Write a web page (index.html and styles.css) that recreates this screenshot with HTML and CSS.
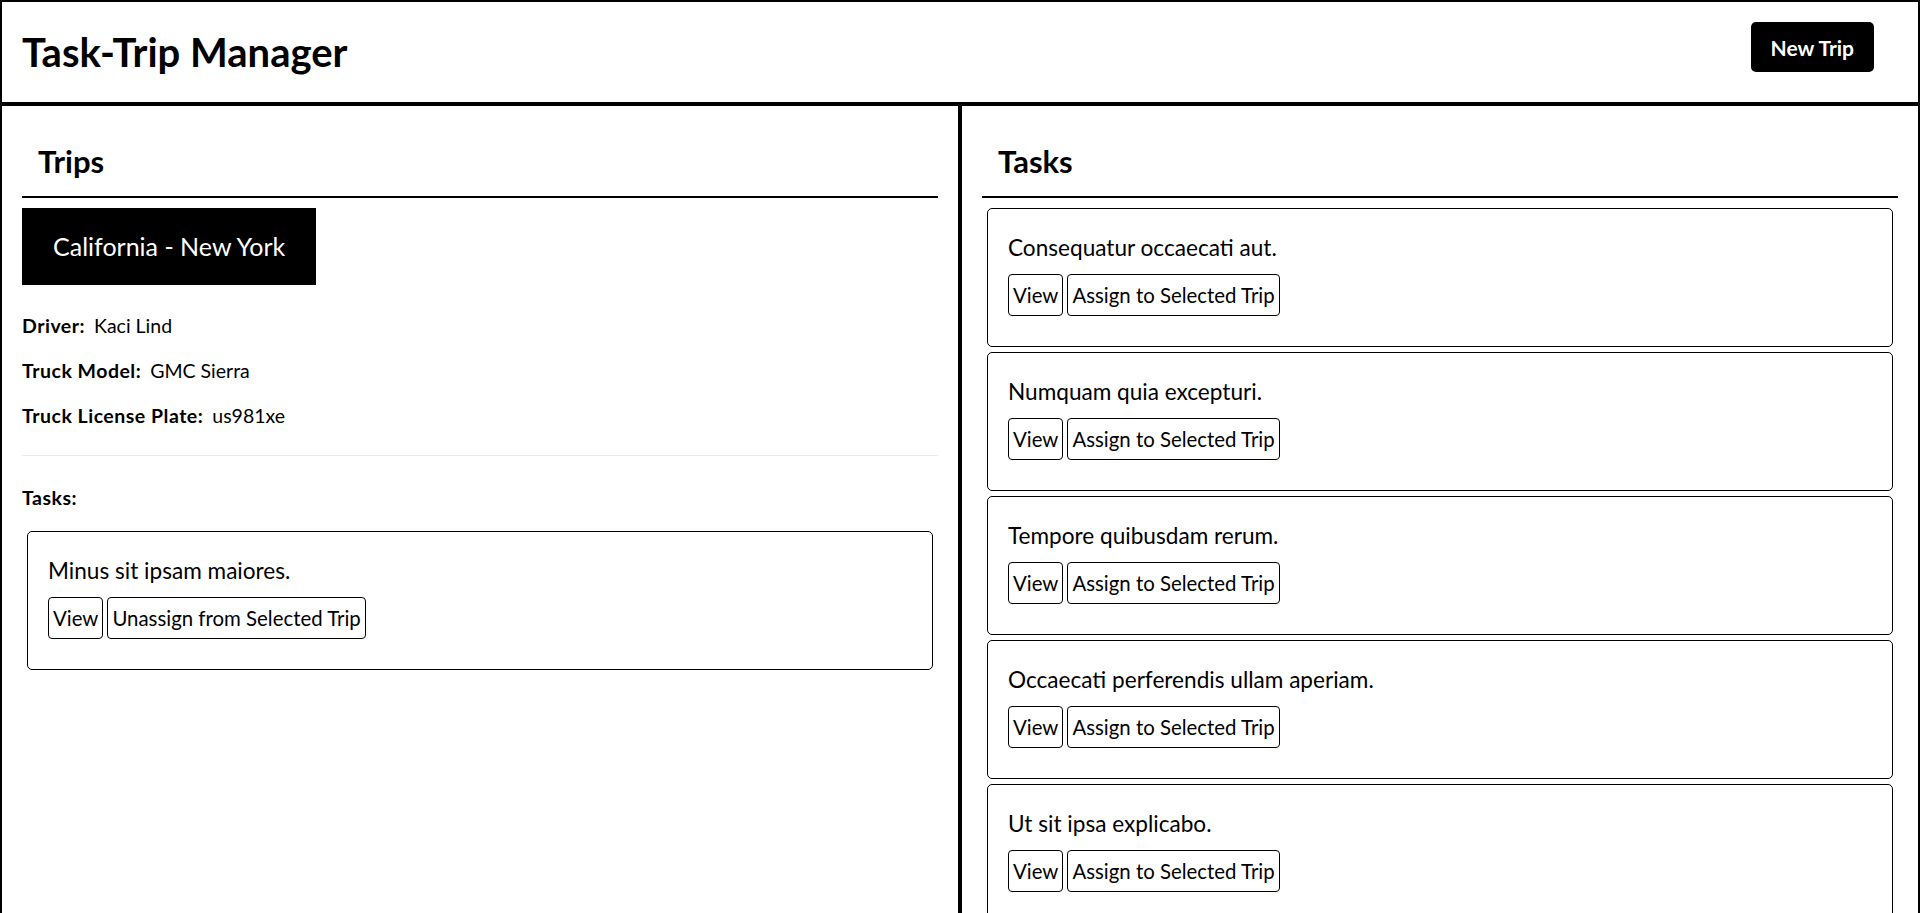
FILE: index.html
```html
<!DOCTYPE html>
<html lang="en">
<head>
<meta charset="utf-8">
<title>Task-Trip Manager</title>
<link rel="stylesheet" href="styles.css">
</head>
<body>
<header class="app-header">
  <h1 class="app-title">Task-Trip Manager</h1>
  <button class="btn-primary">New Trip</button>
</header>
<main class="layout">
  <section class="panel">
    <h2 class="panel-title">Trips</h2>
    <div class="trip-list">
      <button class="trip-item">California - New York</button>
    </div>
    <div class="trip-details">
      <p class="detail"><strong class="label">Driver:</strong> Kaci Lind</p>
      <p class="detail"><strong class="label">Truck Model:</strong> GMC Sierra</p>
      <p class="detail"><strong class="label">Truck License Plate:</strong> us981xe</p>
    </div>
    <hr class="divider">
    <p class="detail tasks-label"><strong class="label">Tasks:</strong></p>
    <div class="task-list trip-tasks">
      <div class="task-card">
        <p class="task-title">Minus sit ipsam maiores.</p>
        <div class="task-actions">
          <button class="btn">View</button>
          <button class="btn">Unassign from Selected Trip</button>
        </div>
      </div>
    </div>
  </section>
  <section class="panel">
    <h2 class="panel-title">Tasks</h2>
    <div class="task-list all-tasks">
      <div class="task-card">
        <p class="task-title">Consequatur occaecati aut.</p>
        <div class="task-actions"><button class="btn">View</button><button class="btn">Assign to Selected Trip</button></div>
      </div>
      <div class="task-card">
        <p class="task-title">Numquam quia excepturi.</p>
        <div class="task-actions"><button class="btn">View</button><button class="btn">Assign to Selected Trip</button></div>
      </div>
      <div class="task-card">
        <p class="task-title">Tempore quibusdam rerum.</p>
        <div class="task-actions"><button class="btn">View</button><button class="btn">Assign to Selected Trip</button></div>
      </div>
      <div class="task-card">
        <p class="task-title">Occaecati perferendis ullam aperiam.</p>
        <div class="task-actions"><button class="btn">View</button><button class="btn">Assign to Selected Trip</button></div>
      </div>
      <div class="task-card">
        <p class="task-title">Ut sit ipsa explicabo.</p>
        <div class="task-actions"><button class="btn">View</button><button class="btn">Assign to Selected Trip</button></div>
      </div>
      <div class="task-card">
        <p class="task-title">Quia voluptatem dolores.</p>
        <div class="task-actions"><button class="btn">View</button><button class="btn">Assign to Selected Trip</button></div>
      </div>
      <div class="task-card">
        <p class="task-title">Eius nihil sint.</p>
        <div class="task-actions"><button class="btn">View</button><button class="btn">Assign to Selected Trip</button></div>
      </div>
    </div>
  </section>
</main>
</body>
</html>
```
FILE: styles.css
```css
* { box-sizing: border-box; }

html, body {
  margin: 0;
  padding: 0;
  background: #fff;
  color: #000;
  font-family: Lato, "Noto Sans", "Liberation Sans", sans-serif;
}

button {
  font-family: inherit;
  color: inherit;
  cursor: pointer;
}

.app-header {
  display: flex;
  justify-content: space-between;
  align-items: flex-start;
  border: 2px solid #000;
  padding: 20px;
}

.app-title {
  margin: 0;
  font-size: 40px;
  line-height: 60px;
  font-weight: 700;
}

.btn-primary {
  background: #000;
  color: #fff;
  border: none;
  border-radius: 5px;
  height: 50px;
  padding: 0 20px;
  margin-right: 24px;
  font-size: 21px;
  font-weight: 700;
}

.layout {
  display: grid;
  grid-template-columns: 1fr 1fr;
}

.panel {
  border: 2px solid #000;
  border-bottom: none;
  padding: 20px 20px 40px;
  min-height: 900px;
}

.panel-title {
  margin: 0;
  padding: 14px 16px;
  font-size: 31px;
  line-height: 42px;
  font-weight: 700;
  border-bottom: 2px solid #000;
}

.trip-list {
  padding-top: 10px;
}

.trip-item {
  background: #000;
  color: #fff;
  border: none;
  border-radius: 0;
  padding: 22px 31px;
  font-size: 25px;
  line-height: 33px;
}

.trip-details {
  display: flex;
  flex-direction: column;
  gap: 18px;
  padding-top: 27px;
}

.detail {
  margin: 0;
  font-size: 19.5px;
  line-height: 27px;
}

.label {
  font-weight: 700;
  letter-spacing: 0.5px;
  margin-right: 4px;
}

.divider {
  border: none;
  border-top: 1px solid #eaeaea;
  margin: 26px 0 28px;
}

.trip-tasks {
  padding-top: 15px;
}

.all-tasks {
  padding-top: 5px;
}

.task-card {
  margin: 5px;
  border: 1px solid #000;
  border-radius: 5px;
  padding: 24px 20px 30px;
}

.task-title {
  margin: 0 0 11px;
  font-size: 22.6px;
  line-height: 30px;
}

.task-actions {
  display: flex;
  gap: 4px;
}

.btn {
  background: #fff;
  border: 1px solid #000;
  border-radius: 4px;
  padding: 6px 4px;
  font-size: 20.4px;
  line-height: 28px;
}
```
